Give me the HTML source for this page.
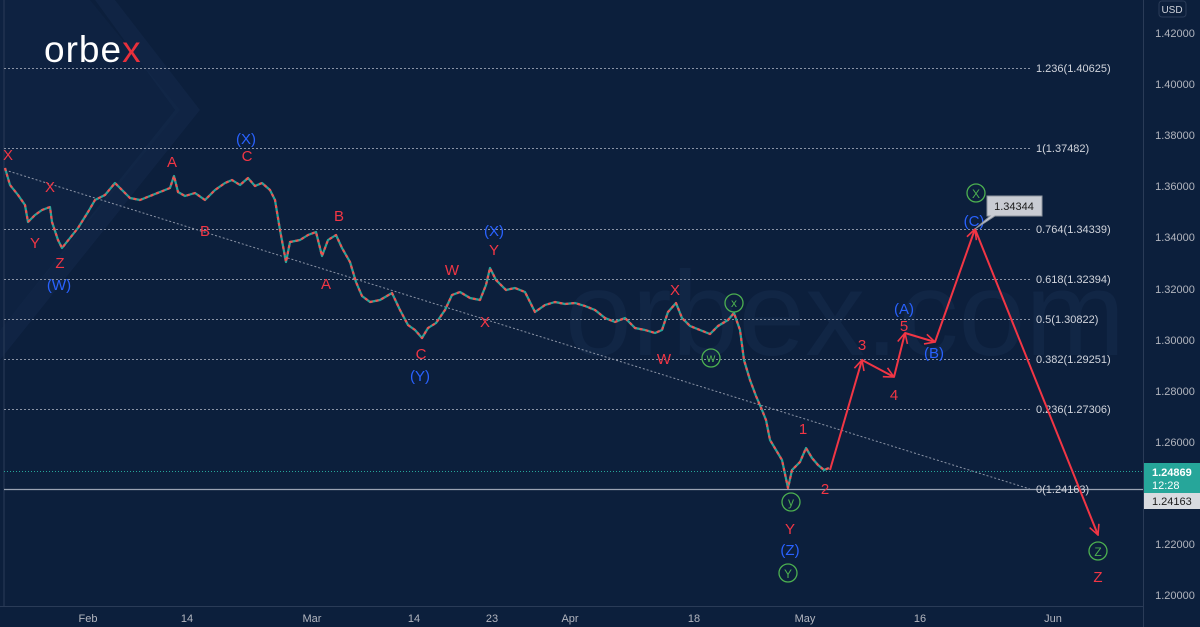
<!DOCTYPE html>
<html><head><meta charset="utf-8"><style>
html,body{margin:0;padding:0;background:#0c1f3c;}
svg{display:block}
text{font-family:"Liberation Sans",sans-serif;}
</style></head><body>
<svg width="1200" height="627" viewBox="0 0 1200 627" xmlns="http://www.w3.org/2000/svg">
<defs>
<marker id="ah" viewBox="0 0 12 12" refX="11" refY="6" markerWidth="12" markerHeight="12" markerUnits="userSpaceOnUse" orient="auto"><path d="M1 1 L11 6 L1 11" fill="none" stroke="#f23645" stroke-width="1.6"/></marker>
</defs>
<rect width="1200" height="627" fill="#0c1f3c"/>
<path d="M0 0 L90 0 L180 110 L0 330 Z" fill="#102545" opacity="0.6"/>
<path d="M95 0 L175 110 L0 330 L0 360 L200 110 L115 0Z" fill="#13294b" opacity="0.5"/>
<text x="565" y="355" font-size="120" fill="#14294a" opacity="0.7">orbex.com</text>
<line x1="4" y1="0" x2="4" y2="606" stroke="#2a3b57" stroke-width="1"/>
<line x1="1143.5" y1="0" x2="1143.5" y2="627" stroke="#2a3b57"/>
<line x1="0" y1="606.5" x2="1143" y2="606.5" stroke="#2a3b57"/>
<g stroke="#8a93a5" stroke-width="1" stroke-dasharray="2 2">
<line x1="4" y1="68.5" x2="1030" y2="68.5"/>
<line x1="4" y1="148.5" x2="1030" y2="148.5"/>
<line x1="4" y1="229.5" x2="1030" y2="229.5"/>
<line x1="4" y1="279.5" x2="1030" y2="279.5"/>
<line x1="4" y1="319.5" x2="1030" y2="319.5"/>
<line x1="4" y1="359.5" x2="1030" y2="359.5"/>
<line x1="4" y1="409.5" x2="1030" y2="409.5"/>
</g>
<line x1="4" y1="489.5" x2="1143" y2="489.5" stroke="#9aa3b3" stroke-width="1.2"/>
<line x1="4" y1="471.5" x2="1143" y2="471.5" stroke="#26a69a" stroke-width="1" stroke-dasharray="1 2"/>
<line x1="5" y1="170" x2="1030" y2="489" stroke="#8a93a5" stroke-width="1" stroke-dasharray="2 2"/>
<g font-size="11" fill="#d1d4dc">
<text x="1036" y="72">1.236(1.40625)</text>
<text x="1036" y="152">1(1.37482)</text>
<text x="1036" y="233">0.764(1.34339)</text>
<text x="1036" y="283">0.618(1.32394)</text>
<text x="1036" y="323">0.5(1.30822)</text>
<text x="1036" y="363">0.382(1.29251)</text>
<text x="1036" y="413">0.236(1.27306)</text>
<text x="1036" y="493">0(1.24163)</text>
</g>
<g fill="none" stroke-width="2.2" stroke-linejoin="round">
<polyline stroke="#26a69a" points="5,168 10,185 18,195 25,205 28,222 35,215 42,210 50,207 52,222 58,240 62,248 70,238 78,228 88,212 95,200 105,195 115,183 122,190 130,198 140,200 150,196 160,192 170,188 174,176 178,192 185,196 195,193 205,200 215,190 225,183 232,180 240,185 248,178 255,186 262,183 270,190 275,200 280,230 286,262 290,242 300,240 308,235 316,232 322,256 328,240 336,235 342,248 350,262 356,282 362,296 370,302 380,300 392,293 400,310 408,325 415,330 422,338 428,328 436,323 445,310 452,295 460,292 470,298 480,300 486,285 490,268 496,280 506,290 515,288 525,292 535,312 545,305 555,302 565,304 575,303 585,306 595,310 605,318 615,322 625,318 635,328 645,330 655,333 662,330 668,312 676,303 682,318 690,326 700,330 710,334 718,326 728,320 734,313 740,330 744,360 750,380 756,396 762,410 766,420 770,440 776,450 782,460 788,488 792,470 800,462 806,448 812,458 818,465 824,470 829,468"/>
<polyline stroke="#ef5350" stroke-dasharray="3 3" points="5,168 10,185 18,195 25,205 28,222 35,215 42,210 50,207 52,222 58,240 62,248 70,238 78,228 88,212 95,200 105,195 115,183 122,190 130,198 140,200 150,196 160,192 170,188 174,176 178,192 185,196 195,193 205,200 215,190 225,183 232,180 240,185 248,178 255,186 262,183 270,190 275,200 280,230 286,262 290,242 300,240 308,235 316,232 322,256 328,240 336,235 342,248 350,262 356,282 362,296 370,302 380,300 392,293 400,310 408,325 415,330 422,338 428,328 436,323 445,310 452,295 460,292 470,298 480,300 486,285 490,268 496,280 506,290 515,288 525,292 535,312 545,305 555,302 565,304 575,303 585,306 595,310 605,318 615,322 625,318 635,328 645,330 655,333 662,330 668,312 676,303 682,318 690,326 700,330 710,334 718,326 728,320 734,313 740,330 744,360 750,380 756,396 762,410 766,420 770,440 776,450 782,460 788,488 792,470 800,462 806,448 812,458 818,465 824,470 829,468"/>
</g>
<g fill="none" stroke="#f23645" stroke-width="2">
<line x1="830" y1="470" x2="862" y2="360" marker-end="url(#ah)"/>
<line x1="862" y1="360" x2="894" y2="377" marker-end="url(#ah)"/>
<line x1="894" y1="377" x2="905" y2="333" marker-end="url(#ah)"/>
<line x1="905" y1="333" x2="935" y2="342" marker-end="url(#ah)"/>
<line x1="935" y1="342" x2="975" y2="229" marker-end="url(#ah)"/>
<line x1="975" y1="229" x2="1098" y2="535" marker-end="url(#ah)"/>
</g>
<g font-size="15" fill="#f23645" text-anchor="middle">
<text x="8" y="160">X</text><text x="50" y="192">X</text><text x="35" y="248">Y</text><text x="60" y="268">Z</text>
<text x="172" y="167">A</text><text x="205" y="236">B</text><text x="247" y="161">C</text>
<text x="339" y="221">B</text><text x="326" y="289">A</text><text x="421" y="359">C</text>
<text x="452" y="275">W</text><text x="485" y="327">X</text><text x="494" y="255">Y</text>
<text x="675" y="295">X</text><text x="664" y="364">W</text>
<text x="803" y="434">1</text><text x="825" y="494">2</text>
<text x="862" y="350">3</text><text x="894" y="400">4</text><text x="904" y="331">5</text>
<text x="790" y="534">Y</text><text x="1098" y="582">Z</text>
</g>
<g font-size="15" fill="#2962ff" text-anchor="middle">
<text x="246" y="144">(X)</text><text x="59" y="290">(W)</text><text x="420" y="381">(Y)</text>
<text x="494" y="236">(X)</text><text x="790" y="555">(Z)</text>
<text x="904" y="314">(A)</text><text x="934" y="358">(B)</text><text x="974" y="226">(C)</text>
</g>
<g fill="none" stroke="#4caf50" stroke-width="1.3">
<circle cx="976" cy="193" r="9"/><circle cx="734" cy="303" r="9"/><circle cx="711" cy="358" r="9"/>
<circle cx="791" cy="502" r="9"/><circle cx="788" cy="573" r="9"/><circle cx="1098" cy="551" r="9"/>
</g>
<g font-size="12" fill="#4caf50" text-anchor="middle">
<text x="976" y="198">X</text><text x="734" y="307">x</text><text x="711" y="362">w</text>
<text x="791" y="506">y</text><text x="788" y="578">Y</text><text x="1098" y="556">Z</text>
</g>
<path d="M975 229 L990 216 L987 216 L987 196 L1042 196 L1042 216 L995 216 Z" fill="#c9ccd3" stroke="#8e949e"/>
<text x="1014" y="210" font-size="11" fill="#1a1a1a" text-anchor="middle">1.34344</text>
<text x="44" y="62" font-size="37" fill="#ffffff" letter-spacing="1">orbe<tspan fill="#e8303c">x</tspan></text>
<rect x="1159" y="1" width="27" height="16" rx="3" fill="#0c1f3c" stroke="#2a3b57"/>
<text x="1172" y="13" font-size="10" fill="#d1d4dc" text-anchor="middle">USD</text>
<g font-size="11" fill="#b2b5be" text-anchor="middle">
<text x="1175" y="37">1.42000</text><text x="1175" y="88">1.40000</text><text x="1175" y="139">1.38000</text>
<text x="1175" y="190">1.36000</text><text x="1175" y="241">1.34000</text><text x="1175" y="293">1.32000</text>
<text x="1175" y="344">1.30000</text><text x="1175" y="395">1.28000</text><text x="1175" y="446">1.26000</text>
<text x="1175" y="548">1.22000</text><text x="1175" y="599">1.20000</text>
</g>
<rect x="1144" y="463" width="56" height="30" fill="#26a69a"/>
<text x="1152" y="476" font-size="11" fill="#fff" font-weight="bold">1.24869</text>
<text x="1152" y="489" font-size="11" fill="#fff">12:28</text>
<rect x="1144" y="493" width="56" height="16" fill="#d8dbe0"/>
<text x="1152" y="505" font-size="11" fill="#1a1a1a">1.24163</text>
<g font-size="11" fill="#b2b5be" text-anchor="middle">
<text x="88" y="622">Feb</text><text x="187" y="622">14</text><text x="312" y="622">Mar</text>
<text x="414" y="622">14</text><text x="492" y="622">23</text><text x="570" y="622">Apr</text>
<text x="694" y="622">18</text><text x="805" y="622">May</text><text x="920" y="622">16</text>
<text x="1053" y="622">Jun</text>
</g>
</svg>
</body></html>
